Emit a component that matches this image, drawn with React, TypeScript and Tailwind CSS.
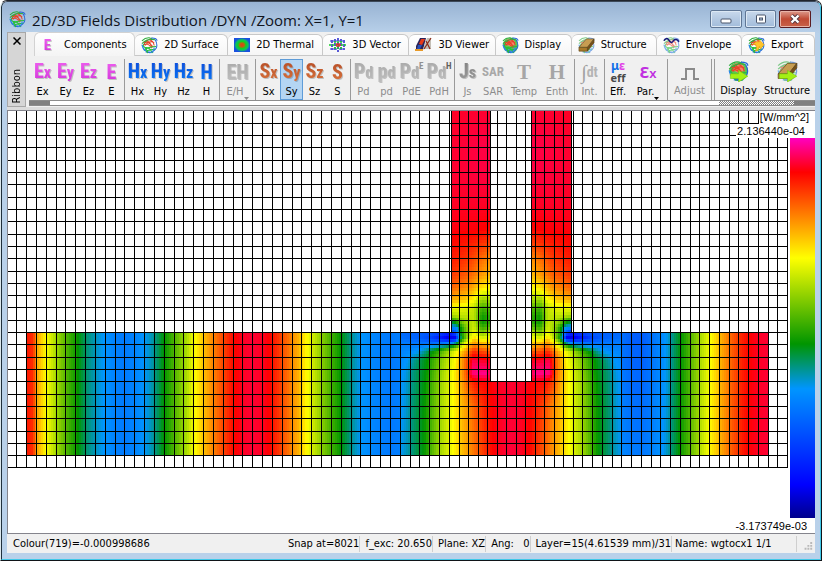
import React from "react";

/* ---------- colour scale ---------- */

type Stop = { at: number; rgb: [number, number, number] };

const SCALE: Stop[] = [
  { at: 0, rgb: [255, 0, 192] },
  { at: 34, rgb: [255, 0, 0] },
  { at: 77, rgb: [255, 132, 0] },
  { at: 120, rgb: [255, 255, 0] },
  { at: 206, rgb: [0, 149, 0] },
  { at: 251, rgb: [0, 149, 255] },
  { at: 347, rgb: [0, 0, 255] },
  { at: 380, rgb: [0, 0, 140] },
];

function colourOf(t: number): string {
  for (let i = 1; i < SCALE.length; i++) {
    const a = SCALE[i - 1];
    const b = SCALE[i];
    if (t <= b.at) {
      const k = (t - a.at) / (b.at - a.at);
      const c = a.rgb.map((v, n) => Math.round(v + (b.rgb[n] - v) * k));
      return `rgb(${c[0]},${c[1]},${c[2]})`;
    }
  }
  return "rgb(0,0,140)";
}

type Curve = [number, number][];

function along(curve: Curve, x: number): number {
  if (x <= curve[0][0]) return curve[0][1];
  for (let i = 1; i < curve.length; i++) {
    const [x1, v1] = curve[i];
    if (x <= x1) {
      const [x0, v0] = curve[i - 1];
      return v0 + ((v1 - v0) * (x - x0)) / (x1 - x0);
    }
  }
  return curve[curve.length - 1][1];
}

/* ---------- field samples ---------- */

const AXIS = 511;

const LEFT_GUIDE: Curve = [
  [27, 42], [33, 48], [37, 88], [46, 120], [56, 150], [66, 178], [78, 206], [86, 225], [96, 240],
  [104, 251], [115, 264], [124, 268], [135, 262], [144, 251], [153, 235], [164, 206], [176, 175],
  [186, 150], [195, 120], [204, 97], [214, 75], [224, 55], [234, 36], [243, 28], [252, 25],
  [262, 28], [270, 35], [278, 50], [288, 70], [298, 92], [307, 120], [318, 150], [330, 180],
  [341, 206], [350, 228], [361, 251], [375, 262], [390, 269], [400, 266],
];

const RIGHT_GUIDE_TOP: Curve = [
  [621, 274], [632, 286], [642, 288], [652, 274], [662, 258], [666, 251], [675, 222], [681, 206],
  [690, 180], [700, 150], [711, 120], [722, 90], [732, 65], [742, 45], [750, 34], [760, 27], [768, 25],
];

const RIGHT_GUIDE_BOTTOM: Curve = [
  [621, 260], [632, 268], [642, 270], [652, 264], [663, 251], [672, 226], [679, 206],
  [690, 176], [700, 146], [709, 120], [722, 88], [732, 63], [742, 43], [748, 34], [760, 27], [768, 25],
];

const JUNCTION: { y: number; row: Curve }[] = [
  { y: 110, row: [[451, 28], [470, 26], [490, 26]] },
  { y: 145, row: [[451, 26], [480, 22], [490, 22]] },
  { y: 175, row: [[451, 26], [480, 23], [490, 23]] },
  { y: 205, row: [[451, 28], [475, 27], [490, 28]] },
  { y: 230, row: [[451, 32], [475, 33], [490, 36]] },
  { y: 245, row: [[451, 36], [470, 44], [490, 58]] },
  { y: 260, row: [[451, 42], [470, 54], [490, 82]] },
  { y: 275, row: [[451, 52], [470, 66], [480, 82], [490, 96]] },
  { y: 288, row: [[451, 66], [470, 84], [480, 108], [490, 120]] },
  { y: 300, row: [[451, 92], [465, 102], [474, 120], [482, 156], [490, 150]] },
  { y: 307, row: [[451, 122], [465, 128], [474, 140], [482, 182], [490, 174]] },
  { y: 316, row: [[451, 150], [460, 142], [474, 142], [482, 202], [490, 190]] },
  { y: 322, row: [[451, 215], [456, 196], [464, 156], [474, 140], [482, 204], [490, 190]] },
  { y: 328, row: [[451, 262], [456, 256], [461, 206], [466, 165], [474, 135], [482, 186], [490, 172]] },
  { y: 333, row: [[400, 278], [430, 290], [440, 304], [450, 325], [456, 290], [461, 206], [466, 165], [474, 125], [482, 162], [490, 140]] },
  { y: 338, row: [[400, 274], [420, 286], [430, 302], [440, 330], [448, 356], [455, 356], [459, 262], [462, 206], [467, 155], [474, 106], [482, 132], [490, 124]] },
  { y: 344, row: [[400, 266], [420, 270], [430, 274], [440, 268], [450, 256], [457, 206], [461, 160], [466, 118], [474, 82], [482, 92], [490, 98]] },
  { y: 351, row: [[400, 262], [412, 258], [420, 248], [433, 206], [441, 182], [448, 154], [457, 120], [463, 96], [470, 66], [474, 50], [482, 60], [490, 66]] },
  { y: 360, row: [[400, 258], [407, 251], [414, 232], [427, 206], [441, 162], [455, 120], [462, 85], [468, 54], [473, 22], [482, 28], [490, 30]] },
  { y: 373, row: [[400, 254], [405, 248], [412, 230], [426, 206], [440, 158], [453, 120], [462, 85], [468, 52], [472, 12], [486, 8], [490, 20], [511, 24]] },
  { y: 383, row: [[400, 253], [404, 248], [412, 230], [425, 206], [440, 155], [453, 120], [462, 88], [468, 60], [476, 40], [490, 34], [500, 28], [511, 26]] },
  { y: 405, row: [[400, 252], [404, 248], [412, 228], [424, 206], [440, 154], [453, 120], [462, 95], [475, 64], [485, 44], [492, 34], [502, 27], [511, 25]] },
  { y: 456, row: [[400, 251], [408, 236], [424, 206], [438, 156], [453, 120], [462, 98], [475, 70], [485, 50], [492, 36], [502, 27], [511, 24]] },
];

function junctionAt(x: number, y: number): number {
  const mx = x > AXIS ? 2 * AXIS - x : x;
  for (let i = 1; i < JUNCTION.length; i++) {
    if (y <= JUNCTION[i].y) {
      const a = JUNCTION[i - 1];
      const b = JUNCTION[i];
      const va = along(a.row, mx);
      const vb = along(b.row, mx);
      return va + ((vb - va) * (y - a.y)) / (b.y - a.y);
    }
  }
  return along(JUNCTION[JUNCTION.length - 1].row, mx);
}

/* ---------- mesh lines ---------- */

const MESH_X: number[] = [
  ...Array.from({ length: 44 }, (_, k) => Math.round(26 + 9.837 * k)),
  16, 459, 468, 478, 487, 497, 506, 516, 525, 535, 544, 554, 563, 573,
  ...Array.from({ length: 22 }, (_, k) => Math.floor(573 + 9.76 * (k + 1))),
];

const MESH_Y: number[] = [
  123, 135, 147, 160, 172, 184, 197, 209, 221, 234, 246, 258, 271, 283, 295, 307, 320, 332, 344,
  357, 369, 381, 394, 406, 418, 431, 443, 455, 467,
];

function Patch({ x0, x1, y0, y1 }: { x0: number; x1: number; y0: number; y1: number }) {
  const cells: React.ReactNode[] = [];
  for (let y = y0; y < y1; y += 3) {
    for (let x = x0; x < x1; x += 2) {
      const w = Math.min(2, x1 - x);
      const h = Math.min(3, y1 - y);
      cells.push(
        <rect key={`${x}-${y}`} x={x} y={y} width={w} height={h} fill={colourOf(junctionAt(x + w / 2, y + h / 2))} />,
      );
    }
  }
  return <g>{cells}</g>;
}

function Guide({ x0, x1, top, bottom }: { x0: number; x1: number; top: Curve; bottom: Curve }) {
  const cells: React.ReactNode[] = [];
  const rows = [332, 344, 369, 394, 418, 443, 456];
  for (let r = 1; r < rows.length; r++) {
    const k = (r - 1) / (rows.length - 2);
    for (let x = x0; x < x1; x += 2) {
      const v = along(top, x + 1) * (1 - k) + along(bottom, x + 1) * k;
      cells.push(
        <rect key={`${x}-${r}`} x={x} y={rows[r - 1]} width={Math.min(2, x1 - x)} height={rows[r] - rows[r - 1]} fill={colourOf(v)} />,
      );
    }
  }
  return <g>{cells}</g>;
}

function FieldPlot() {
  return (
    <svg
      viewBox="8 111 780 422"
      preserveAspectRatio="none"
      shapeRendering="crispEdges"
      className="block h-full min-w-0 flex-1"
      role="img"
      aria-label="Field distribution"
    >
      <Guide x0={27} x1={400} top={LEFT_GUIDE} bottom={LEFT_GUIDE} />
      <Guide x0={622} x1={768} top={RIGHT_GUIDE_TOP} bottom={RIGHT_GUIDE_BOTTOM} />
      <Patch x0={400} x1={622} y0={382} y1={456} />
      <Patch x0={400} x1={490} y0={333} y1={382} />
      <Patch x0={532} x1={622} y0={333} y1={382} />
      <Patch x0={452} x1={490} y0={111} y1={333} />
      <Patch x0={532} x1={571} y0={111} y1={333} />
      <g fill="#000">
        {MESH_X.map((x) => (
          <rect key={x} x={x} y={111} width={1} height={357} />
        ))}
        {MESH_Y.map((y) => (
          <rect key={y} x={8} y={y} width={780} height={1} />
        ))}
        <rect x={451} y={111} width={1} height={222} />
        <rect x={490} y={111} width={1} height={271} />
        <rect x={531} y={111} width={1} height={271} />
        <rect x={571} y={111} width={1} height={222} />
      </g>
    </svg>
  );
}

/* ---------- icons ---------- */

type BallKind = "plain" | "solid" | "block" | "wave" | "export";

function Ball({ kind, arrow, className }: { kind: BallKind; arrow?: boolean; className: string }) {
  const faded = kind === "block" || kind === "wave";
  return (
    <svg viewBox="0 0 18 18" className={className} fill="none" aria-hidden="true">
      {kind === "solid" && (
        <>
          <path d="M1 8 Q2 1 9 1 Q17 1 17 9 Q16 17 10 17 Q3 17 1 8 Z" fill="#58c850" />
          <path d="M3 5 Q6 1 10 2 Q14 3 14 8 L9 10 L4 8 Z" fill="#f4866a" />
          <path d="M3 13 Q6 17 12 16 L16 11 L9 13 Z" fill="#5a94e8" />
        </>
      )}
      <g opacity={faded ? 0.6 : 1} strokeWidth="1.1">
        <path d="M1 4 Q5 0 10 1 M1 7 Q7 1 15 3 M2 10 Q4 4 12 1" stroke="#2fae3e" />
        <path d="M11 1 Q17 1 17 4 M15 3 Q18 8 16 12 M2 11 Q5 17 13 16 M5 16 Q12 18 16 12" stroke="#2567d4" />
        <path d="M3 6 Q8 4 13 11 M4 9 Q9 3 14 6 M6 4 Q11 6 11 12 M3 8 Q7 6 10 10 M9 3 Q13 4 14 9" stroke="#e8442a" />
        <path d="M1 9 Q6 11 7 17 M3 14 Q9 10 16 10 M4 11 Q10 11 12 17 M5 15 Q9 13 15 13" stroke="#25c03a" />
        <path d="M1 8 Q2 13 5 15 M9 17 Q14 15 14 11" stroke="#2b86ea" />
      </g>
      {kind === "block" && (
        <g stroke="#5b4418" strokeWidth="0.6">
          <path d="M1 11 L9 2 L17 2 L10 11 Z" fill="#c79d52" />
          <path d="M1 11 L10 11 L10 15 L1 15 Z" fill="#a87929" />
          <path d="M10 11 L17 2 L17 6 L10 15 Z" fill="#765018" />
        </g>
      )}
      {kind === "wave" && <path d="M1 4 Q3 0 6 3 Q9 8 11 4 Q14 1 17 5" stroke="#15157c" strokeWidth="1.6" />}
      {kind === "export" && (
        <path d="M5 8 Q8 4 12 5 L12 3 L17 8 L13 13 L12 10 Q11 15 8 15 Q10 11 8 8 Z" fill="#ffc529" stroke="#e79a12" strokeWidth="0.6" />
      )}
      {arrow && <path d="M2 11 H9 V8 L17 13 L9 18 V15 H2 Z" fill="#a4f014" stroke="#74c410" strokeWidth="0.5" />}
    </svg>
  );
}

function ThermalIcon() {
  return (
    <svg viewBox="0 0 16 16" className="size-4" aria-hidden="true">
      <defs>
        <radialGradient id="heat">
          <stop offset="0" stopColor="#e83a10" />
          <stop offset="0.3" stopColor="#b06a10" />
          <stop offset="0.5" stopColor="#10d020" />
          <stop offset="0.75" stopColor="#10c060" />
          <stop offset="1" stopColor="#1850e0" />
        </radialGradient>
      </defs>
      <rect width="16" height="14" y="1" fill="#1850e0" />
      <rect width="16" height="14" y="1" fill="url(#heat)" />
    </svg>
  );
}

function VectorIcon() {
  return (
    <svg viewBox="0 0 17 16" className="h-4 w-[17px]" fill="none" aria-hidden="true">
      <path d="M3 3 V13 M6 2 V14 M9 1 V15 M12 2 V14 M15 3 V13" stroke="#1414c8" strokeWidth="1.4" strokeDasharray="3 1" />
      <path d="M1 4 H16 M1 12 H16" stroke="#1838e0" strokeDasharray="1 2" />
      <path d="M0 8 H17 M5 5 H13 M5 11 H13" stroke="#18d028" strokeWidth="1.4" strokeDasharray="2 1" />
      <path d="M8 6 V10 M10 6 V10 M7 8 H12" stroke="#e82020" strokeWidth="1.2" />
    </svg>
  );
}

function ViewerIcon() {
  return (
    <svg viewBox="0 0 17 16" className="h-4 w-[17px]" aria-hidden="true">
      <path d="M5 1 H11 L8 13 H1 V9 Z" fill="#2a2358" />
      <path d="M6 2 L10 2 L7 8 L4 7 Z" fill="#e83a18" />
      <path d="M3 8 L7 8 L5 12 L2 12 Z" fill="#2950b8" />
      <path d="M12 1 H16 V12 H8 Z" fill="#c4bfb6" />
      <path d="M11 4 L15 12 M16 1 L9 12" stroke="#8c2c18" strokeWidth="1.2" />
      <path d="M0 12 H8 V14 H0 Z" fill="#e89a28" />
    </svg>
  );
}

/* ---------- tabs ---------- */

const TABS: { label: string; icon: React.ReactNode }[] = [
  { label: "2D Surface", icon: <Ball kind="plain" className="size-[17px]" /> },
  { label: "2D Thermal", icon: <ThermalIcon /> },
  { label: "3D Vector", icon: <VectorIcon /> },
  { label: "3D Viewer", icon: <ViewerIcon /> },
  { label: "Display", icon: <Ball kind="solid" className="size-[17px]" /> },
  { label: "Structure", icon: <Ball kind="block" className="size-[17px]" /> },
  { label: "Envelope", icon: <Ball kind="wave" className="size-[17px]" /> },
  { label: "Export", icon: <Ball kind="export" className="size-[17px]" /> },
];

function Tabs() {
  return (
    <div
      role="tablist"
      className="grid h-6 grid-cols-[101fr_93fr_95fr_86fr_86fr_76fr_85fr_85fr_73fr] pl-2 text-[11px] leading-4"
    >
      <button
        type="button"
        role="tab"
        aria-selected="true"
        className="flex items-center gap-3 rounded-t-md border border-b-0 border-[#d2d2d2] bg-linear-to-b from-white to-[#f4f4f4] pl-2 whitespace-nowrap"
      >
        <span aria-hidden="true" className={`w-[9px] ${GLYPH} text-[15px] leading-4 ${TINT.magenta}`}>E</span>
        Components
      </button>
      {TABS.map((t) => (
        <button
          key={t.label}
          type="button"
          role="tab"
          aria-selected="false"
          className="mt-[2px] flex items-center gap-[6px] rounded-t-md border border-l-0 border-[#c8c8c8] bg-linear-to-b from-white to-[#f6f6f6] pl-[6px] whitespace-nowrap"
        >
          {t.icon}
          {t.label}
        </button>
      ))}
    </div>
  );
}

/* ---------- toolbar ---------- */

const GLYPH = "font-['Roboto_Condensed',Roboto,sans-serif] font-extrabold bg-clip-text text-transparent bg-linear-to-b drop-shadow-[1px_1px_0_#0003]";

const TINT = {
  magenta: "from-[#f060f0] to-[#d030d8]",
  blue: "from-[#1048d8] to-[#0c7cf8]",
  orange: "from-[#b44a24] to-[#dc7840]",
  grey: "from-[#a8a8a8] to-[#c0c0c0]",
  dark: "from-[#808080] to-[#a0a0a0]",
};

type Tint = keyof typeof TINT;

function Letters({ big, small, tint }: { big: string; small?: string; tint: Tint }) {
  return (
    <span aria-hidden="true" className={`${GLYPH} ${TINT[tint]} text-[20px] leading-6 whitespace-nowrap`}>
      {big}
      {small && <span className="text-[16px]">{small}</span>}
    </span>
  );
}

function Tool({
  label,
  width,
  children,
  active,
  disabled,
  menu,
}: {
  label: string;
  width: string;
  children: React.ReactNode;
  active?: boolean;
  disabled?: boolean;
  menu?: boolean;
}) {
  const tone = disabled ? "text-[#8c8c8c]" : "text-black";
  const face = active ? "border-[#5e9cd8] bg-[#b4d5f3]" : "border-transparent";
  return (
    <button
      type="button"
      disabled={disabled}
      aria-pressed={active}
      className={`flex h-[41px] shrink-0 flex-col items-center border ${width} ${tone} ${face}`}
    >
      <span className="flex h-6 items-center justify-center">{children}</span>
      <span className="flex items-end text-[11px] leading-4 whitespace-nowrap">
        {label}
        {menu && (
          <svg viewBox="0 0 5 3" className="h-[3px] w-[5px]" fill="currentColor" aria-hidden="true">
            <path d="M0 0 H5 L2.5 3 Z" />
          </svg>
        )}
      </span>
    </button>
  );
}

function Divider() {
  return <div className="mx-px h-[41px] w-px shrink-0 bg-[#9a9a9a]" />;
}

function Toolbar() {
  return (
    <div role="toolbar" className="mt-[3px] flex overflow-hidden pl-[5px]">
      <Tool label="Ex" width="w-[23px]"><Letters big="E" small="x" tint="magenta" /></Tool>
      <Tool label="Ey" width="w-[23px]"><Letters big="E" small="y" tint="magenta" /></Tool>
      <Tool label="Ez" width="w-[23px]"><Letters big="E" small="z" tint="magenta" /></Tool>
      <Tool label="E" width="w-[23px]"><Letters big="E" tint="magenta" /></Tool>
      <Divider />
      <Tool label="Hx" width="w-[23px]"><Letters big="H" small="x" tint="blue" /></Tool>
      <Tool label="Hy" width="w-[23px]"><Letters big="H" small="y" tint="blue" /></Tool>
      <Tool label="Hz" width="w-[23px]"><Letters big="H" small="z" tint="blue" /></Tool>
      <Tool label="H" width="w-[23px]"><Letters big="H" tint="blue" /></Tool>
      <Divider />
      <Tool label="E/H" width="w-[33px]" disabled menu><Letters big="EH" tint="grey" /></Tool>
      <Divider />
      <Tool label="Sx" width="w-[23px]"><Letters big="S" small="x" tint="orange" /></Tool>
      <Tool label="Sy" width="w-[23px]" active><Letters big="S" small="y" tint="orange" /></Tool>
      <Tool label="Sz" width="w-[23px]"><Letters big="S" small="z" tint="orange" /></Tool>
      <Tool label="S" width="w-[23px]"><Letters big="S" tint="orange" /></Tool>
      <Divider />
      <Tool label="Pd" width="w-[23px]" disabled><Letters big="P" small="d" tint="grey" /></Tool>
      <Tool label="pd" width="w-[23px]" disabled><Letters big="p" small="d" tint="grey" /></Tool>
      <Tool label="PdE" width="w-[27px]" disabled>
        <Letters big="P" small="d" tint="grey" />
        <span aria-hidden="true" className="self-start font-['Roboto_Condensed',Roboto,sans-serif] text-[9px] leading-3 font-bold text-[#909090]">E</span>
      </Tool>
      <Tool label="PdH" width="w-[28px]" disabled>
        <Letters big="P" small="d" tint="grey" />
        <span aria-hidden="true" className="self-start font-['Roboto_Condensed',Roboto,sans-serif] text-[9px] leading-3 font-bold text-[#606060]">H</span>
      </Tool>
      <Divider />
      <Tool label="Js" width="w-[23px]" disabled><Letters big="J" small="s" tint="dark" /></Tool>
      <Tool label="SAR" width="w-[28px]" disabled>
        <span aria-hidden="true" className="font-['Roboto_Condensed',Roboto,sans-serif] text-[13px] leading-6 font-bold text-[#a8a8a8]">SAR</span>
      </Tool>
      <Tool label="Temp" width="w-[34px]" disabled>
        <span aria-hidden="true" className="font-['Liberation_Serif',serif] text-[21px] leading-6 font-bold text-[#a6a6a6]">T</span>
      </Tool>
      <Tool label="Enth" width="w-[32px]" disabled>
        <span aria-hidden="true" className="font-['Liberation_Serif',serif] text-[21px] leading-6 font-bold text-[#a6a6a6]">H</span>
      </Tool>
      <Divider />
      <Tool label="Int." width="w-[27px]" disabled>
        <span aria-hidden="true" className="font-['Liberation_Serif',serif] text-[20px] leading-6 text-[#a0a0a0]">∫</span>
        <span aria-hidden="true" className="font-['Roboto_Condensed',Roboto,sans-serif] text-[14px] leading-6 font-bold text-[#b4b4b4]">dt</span>
      </Tool>
      <Divider />
      <Tool label="Eff." width="w-[24px]">
        <span aria-hidden="true" className="flex flex-col items-center font-['Noto_Sans',sans-serif] leading-3 font-bold">
          <span className="text-[12px] whitespace-nowrap text-[#1070e8]">μ<span className="text-[#e040e8]">ε</span></span>
          <span className="text-[11px] text-[#484848]">eff</span>
        </span>
      </Tool>
      <Tool label="Par." width="w-[36px]" menu>
        <span aria-hidden="true" className="font-['Noto_Sans',sans-serif] text-[20px] leading-6 font-semibold text-[#c030e0]">ε<span className="text-[13px]">x</span></span>
      </Tool>
      <Divider />
      <Tool label="Adjust" width="w-[41px]" disabled>
        <svg viewBox="0 0 20 14" className="mt-1 h-[14px] w-5" fill="none" stroke="#8a8a8a" strokeWidth="2" aria-hidden="true">
          <path d="M1 12 H6 V2 H14 V12 H19" />
        </svg>
      </Tool>
      <Divider />
      <Divider />
      <Tool label="Display" width="w-[45px]"><Ball kind="solid" arrow className="size-[21px]" /></Tool>
      <Tool label="Structure" width="w-[52px]"><Ball kind="block" arrow className="size-[21px]" /></Tool>
    </div>
  );
}

/* ---------- window ---------- */

function Caption() {
  const plain = "border-[#5f7695] bg-linear-to-b from-[#c9d9ec] via-[#b4c9e2] to-[#a2bcdb]";
  return (
    <header className="flex h-[30px] shrink-0 items-start justify-between pr-1 pl-[2px]">
      <h1 className="flex h-[30px] items-center gap-[6px] pt-[5px] font-['Open_Sans','Noto_Sans',sans-serif] text-[15px] leading-6 whitespace-nowrap text-[#10141c]">
        <Ball kind="plain" className="size-[17px]" />
        2D/3D Fields Distribution /DYN /Zoom: X=1, Y=1
      </h1>
      <div className="mt-2 flex gap-[3px]">
        <button type="button" aria-label="Minimize" className={`flex h-[18px] w-8 items-center justify-center rounded-[2px] border shadow-[inset_0_0_0_1px_#dce8f4] ${plain}`}>
          <svg viewBox="0 0 12 10" className="h-[10px] w-3" aria-hidden="true">
            <rect x="1" y="5" width="10" height="4" rx="1" fill="#fff" stroke="#48546a" />
          </svg>
        </button>
        <button type="button" aria-label="Maximize" className={`flex h-[18px] w-[31px] items-center justify-center rounded-[2px] border shadow-[inset_0_0_0_1px_#dce8f4] ${plain}`}>
          <svg viewBox="0 0 12 10" className="h-[10px] w-3" aria-hidden="true">
            <rect x="1.5" y="1" width="9" height="8" rx="1" fill="#fff" stroke="#48546a" />
            <rect x="4.5" y="4" width="3" height="2" fill="#b4c9e2" stroke="#48546a" />
          </svg>
        </button>
        <button type="button" aria-label="Close" className="flex h-[18px] w-8 items-center justify-center rounded-[2px] border border-[#5a1c22] bg-linear-to-b from-[#dc9a8c] via-[#c04a34] to-[#c8624a] shadow-[inset_0_0_0_1px_#e8b4a8]">
          <svg viewBox="0 0 12 10" className="h-[10px] w-3" fill="none" aria-hidden="true">
            <path d="M2.5 1.5 L9.5 8.5 M9.5 1.5 L2.5 8.5" stroke="#4c3440" strokeWidth="4" />
            <path d="M2.5 1.5 L9.5 8.5 M9.5 1.5 L2.5 8.5" stroke="#fff" strokeWidth="2.4" />
          </svg>
        </button>
      </div>
    </header>
  );
}

function Ribbon() {
  return (
    <div className="flex h-[75px] shrink-0 bg-[#f0f0f0]">
      <div className="flex w-[19px] shrink-0 flex-col items-center justify-between border border-[#a8a8a8] bg-[#d6d6d6] pt-[2px]">
        <button type="button" aria-label="Close ribbon" className="flex size-3 items-center justify-center">
          <svg viewBox="0 0 8 8" className="size-2" stroke="#000" strokeWidth="1.5" aria-hidden="true">
            <path d="M0.5 0.5 L7.5 7.5 M7.5 0.5 L0.5 7.5" />
          </svg>
        </button>
        <span className="rotate-180 pt-[2px] text-[11px] leading-4 [writing-mode:vertical-rl]">Ribbon</span>
      </div>
      <div className="flex min-w-0 flex-1 flex-col">
        <Tabs />
        <Toolbar />
        <div className="ml-[3px] flex h-[6px] justify-between border-t border-b border-[#8c8c8c] bg-white">
          <div className="w-[21px] bg-[#808080]" />
          <div className="flex w-24">
            <div className="flex-1 bg-[repeating-conic-gradient(#808080_0_25%,#fff_0_50%)] bg-size-[2px_2px]" />
            <div className="w-[21px] bg-[#808080]" />
          </div>
        </div>
      </div>
    </div>
  );
}

function StatusBar() {
  const cell = "border-r border-[#cfcfcf] pl-[5px] whitespace-pre";
  return (
    <footer className="flex h-5 shrink-0 items-center justify-between border-t border-[#84848c] bg-[#f0f0f0] text-[11px] leading-4">
      <span className="pl-[6px]">Colour(719)=-0.000998686</span>
      <div className="flex items-center">
        <span className={cell}>Snap at=8021</span>
        <span className={cell}>f_exc: 20.650</span>
        <span className={cell}>Plane: XZ</span>
        <span className={cell}>Ang:   0</span>
        <span className={cell}>Layer=15(4.61539 mm)/31</span>
        <span className="w-[125px] border-r border-[#cfcfcf] pl-[3px] whitespace-nowrap">Name: wgtocx1 1/1</span>
        <svg viewBox="0 0 19 16" className="h-4 w-[18px]" fill="#b8b8b8" aria-hidden="true">
          <path d="M14 6h2v2h-2z M11 9h2v2h-2z M14 9h2v2h-2z M8 12h2v2h-2z M11 12h2v2h-2z M14 12h2v2h-2z" />
        </svg>
      </div>
    </footer>
  );
}

export default function App() {
  return (
    <div className="h-screen min-h-[400px] w-full overflow-hidden rounded-t-[7px] border border-t-[#20242c] border-r-[#101418] border-b-[#101418] border-l-[#dce8ee]">
      <div className="flex h-full flex-col rounded-t-[6px] border border-t-[#3c4858] border-r-[#40c8e8] border-b-[#40c8e8] border-l-[#20303c] bg-[#b9d1ea] bg-[linear-gradient(to_bottom,#98b3d3_0,#b9d1ea_32px)] px-[5px] pb-[6px] font-['DejaVu_Sans_Condensed','Noto_Sans',sans-serif] text-black">
        <Caption />
        <Ribbon />
        <div className="h-[3px] shrink-0 bg-[#dcdcdc]" />
        <main className="relative flex min-h-0 flex-1 border-t border-l border-[#84848c] bg-white">
          <FieldPlot />
          <div className="flex w-[27px] shrink-0 flex-col pt-[27px] pb-[15px] pl-[2px]">
            <div className="flex-1 bg-[linear-gradient(to_bottom,#ff00c0_0%,#ff0000_9%,#ffff00_31.6%,#009500_54.2%,#0095ff_66%,#0000ff_91.3%,#00008c_100%)]" />
          </div>
          <div className="absolute top-0 right-[6px] flex flex-col items-end font-['Liberation_Sans',sans-serif] text-[11px] leading-[13px]">
            <span className="bg-white pl-px">[W/mm^2]</span>
            <span className="bg-white pr-1 pl-px leading-[14px]">2.136440e-04</span>
          </div>
          <span className="absolute right-2 bottom-0 font-['Liberation_Sans',sans-serif] text-[11px] leading-[14px]">
            -3.173749e-03
          </span>
        </main>
        <StatusBar />
      </div>
    </div>
  );
}
